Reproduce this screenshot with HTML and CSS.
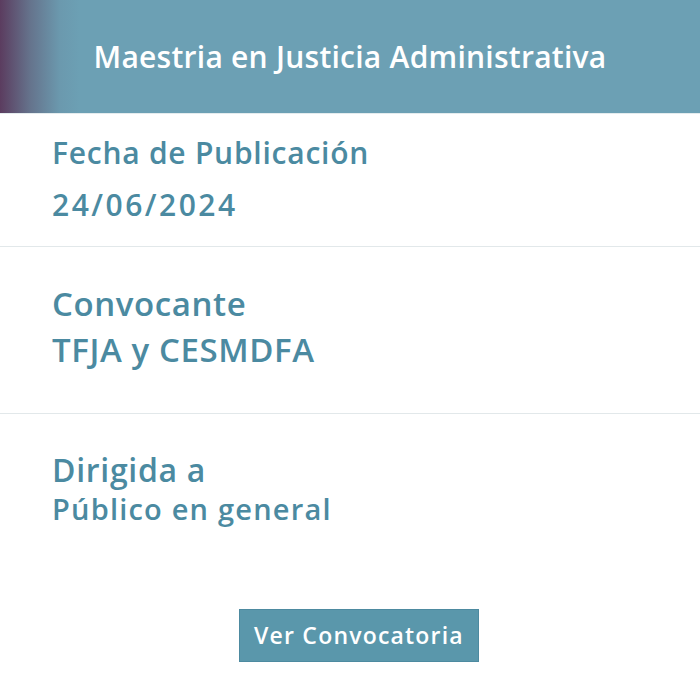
FILE: index.html
```html
<!DOCTYPE html>
<html lang="es">
<head>
    <meta charset="UTF-8">
    <meta name="viewport" content="width=device-width, initial-scale=1.0">
    <title>Maestria en Justicia Administrativa</title>
    <link rel="stylesheet" href="styles.css">
</head>
<body>
    <div class="card">
        <div class="card-header">
            <h1>Maestria en Justicia Administrativa</h1>
        </div>
        <div class="info info-fecha">
            <div class="info-label">Fecha de Publicación</div>
            <div class="info-value">24/06/2024</div>
        </div>
        <div class="info info-convocante">
            <div class="info-label">Convocante</div>
            <div class="info-value">TFJA y CESMDFA</div>
        </div>
        <div class="info info-dirigida">
            <div class="info-label">Dirigida a</div>
            <div class="info-value">Público en general</div>
        </div>
        <div class="actions">
            <a class="btn" href="#">Ver Convocatoria</a>
        </div>
    </div>
</body>
</html>
```

FILE: styles.css
```css
html, body {
    margin: 0;
    padding: 0;
    background-color: #ffffff;
    font-family: 'Open Sans', 'Lato', sans-serif;
}
.card {
    width: 700px;
    height: 692px;
    display: flex;
    flex-direction: column;
}
.card-header {
    height: 113px;
    display: flex;
    align-items: center;
    justify-content: center;
    background: linear-gradient(90deg, #5b3c5f 0px, #65738c 30px, #6b99ae 60px, #6ca0b4 80px, #6ca0b4 100%);
    border-bottom: 1px solid #e4ecee;
}
.card-header h1 {
    margin: 0;
    color: #ffffff;
    font-size: 30px;
    font-weight: 600;
    letter-spacing: 0.25px;
}
.info {
    padding-left: 52px;
    color: #4b8aa1;
    font-weight: 600;
    border-bottom: 1px solid #e2e8ea;
}
.info-fecha {
    height: 133px;
    box-sizing: border-box;
}
.info-fecha .info-label {
    font-size: 30px;
    line-height: 28px;
    margin-top: 25px;
    letter-spacing: 0.75px;
}
.info-fecha .info-value {
    font-size: 30px;
    line-height: 28px;
    margin-top: 24px;
    letter-spacing: 2.5px;
}
.info-convocante {
    height: 167px;
    box-sizing: border-box;
}
.info-convocante .info-label {
    font-size: 33px;
    line-height: 30px;
    margin-top: 42px;
    letter-spacing: 0.6px;
}
.info-convocante .info-value {
    font-size: 33px;
    line-height: 30px;
    margin-top: 16px;
    letter-spacing: 0.6px;
}
.info-dirigida {
    border-bottom: none;
}
.info-dirigida .info-label {
    font-size: 32px;
    line-height: 30px;
    margin-top: 41px;
    letter-spacing: 0.7px;
}
.info-dirigida .info-value {
    font-size: 29px;
    line-height: 28px;
    margin-top: 10px;
    letter-spacing: 1.2px;
}
.actions {
    display: flex;
    justify-content: center;
    padding-left: 18px;
    margin-top: 86px;
}
.btn {
    display: inline-block;
    width: 240px;
    height: 53px;
    line-height: 51px;
    text-align: center;
    background-color: #5a97ab;
    color: #ffffff;
    font-size: 23px;
    font-weight: 600;
    letter-spacing: 1.2px;
    text-decoration: none;
    box-sizing: border-box;
    border: 1px solid #4d8aa0;
}
```
